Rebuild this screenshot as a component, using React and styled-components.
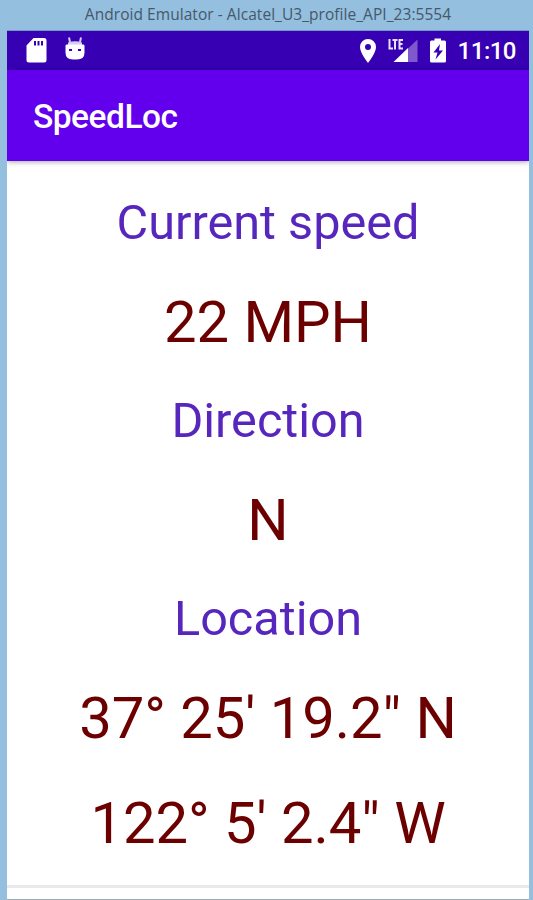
import React from "react";
import styled, { createGlobalStyle } from "styled-components";

const GlobalStyle = createGlobalStyle`
  * { box-sizing: border-box; }
  html, body { margin: 0; padding: 0; }
  body { background: #94bfdf; overflow: hidden; }
`;

const EmulatorWindow = styled.div`
  width: 533px;
  height: 900px;
  display: flex;
  flex-direction: column;
  padding: 0 4px 0 7px;
  background: #94bfdf;
  font-family: Roboto, sans-serif;
`;

const TitleBar = styled.div`
  height: 31px;
  flex: none;
  display: flex;
  justify-content: center;
  padding-top: 4px;
  border-bottom: 1px solid #7493c8;
  color: #46586a;
  font: 15.5px/20px "Open Sans", sans-serif;
  white-space: nowrap;
`;

const TitleText = styled.span`
  letter-spacing: 0.05px;
`;

const Screen = styled.div`
  flex: 1;
  display: flex;
  flex-direction: column;
  overflow: hidden;
  background: #fff;
  border-bottom: 1px solid #9aacb8;
`;

const StatusBar = styled.div`
  height: 39px;
  flex: none;
  display: flex;
  align-items: center;
  justify-content: space-between;
  padding: 0 13px 0 18px;
  background: #3700b3;
  color: #fff;
`;

const IconGroup = styled.div`
  display: flex;
  align-items: center;
  gap: ${(p) => p.$gap}px;
`;

const StatusIcon = styled.svg`
  display: block;
  flex: none;
`;

const Clock = styled.span`
  font-size: 24px;
  line-height: 39px;
  font-weight: 500;
  padding-top: 2px;
  letter-spacing: -0.5px;
`;

const AppBar = styled.header`
  height: 91px;
  flex: none;
  display: flex;
  align-items: center;
  padding: 3px 26px 0;
  background: #6200ee;
  color: #fff;
  box-shadow: 0 1px 5px rgba(0, 0, 0, 0.35);
`;

const AppTitle = styled.h1`
  margin: 0;
  font-size: 33.5px;
  line-height: 40px;
  font-weight: 500;
  letter-spacing: -0.5px;
`;

const Readings = styled.main`
  height: 727px;
  flex: none;
  padding-top: 16px;
  text-align: center;
  border-bottom: 3px solid #e9e9e9;
`;

const Label = styled.div`
  height: 92.5px;
  line-height: 92.5px;
  font-size: 48.6px;
  color: #5726bd;
`;

const Value = styled.div`
  height: 105.5px;
  line-height: 105.5px;
  font-size: 58px;
  color: #6c0000;
  letter-spacing: -0.05px;
`;

const SdCard = () => (
  <StatusIcon width="22" height="27" viewBox="0 0 22 27" fill="#fff">
    <path fillRule="evenodd" d="M8.5 1H19a2.5 2.5 0 0 1 2.5 2.5V23a2.5 2.5 0 0 1-2.5 2.5H4A2.500 2.500 0 0 1 1.500 23V8.500ZM9 4v4.500h2V4ZM12.500 4v4.500h2V4ZM16 4v4.500h2V4Z" />
  </StatusIcon>
);

const AndroidHead = () => (
  <StatusIcon width="22" height="27" viewBox="0 0 22 27">
    <path d="M5 0.500 6 5M17 0.500 16 5" stroke="#d9ccf2" strokeWidth="2" />
    <path d="M4 5.500Q11 3 18 5.500V8H4Z" fill="#d9ccf2" />
    <path d="M2.500 7.500H19.500Q20.500 7.500 20.500 9V15.500Q20.500 22.500 13 22.500H9Q1.500 22.500 1.500 15.500V9Q1.500 7.500 2.500 7.500Z" fill="#fff" />
    <path d="M5 12h3v2H5ZM14 12h3v2h-3Z" fill="#3700b3" />
  </StatusIcon>
);

const Pin = () => (
  <StatusIcon width="18" height="26" viewBox="0 0 18 26" fill="#fff">
    <path fillRule="evenodd" d="M9 1a8 8 0 0 1 8 8C17 15 9 25 9 25S1 15 1 9A8 8 0 0 1 9 1ZM9 6a3 3 0 1 0 0 6 3 3 0 0 0 0-6Z" />
  </StatusIcon>
);

const LteSignal = () => (
  <StatusIcon width="30" height="26" viewBox="0 0 30 26">
    <path d="M20 10.500 29.500 1.500V24H20Z" fill="#8058cd" />
    <path d="M5.500 24 20 10V24Z" fill="#fff" />
    <path d="M1.500 1V10.500H5M4.500 2H9.500M7 2V11.500M15 2H11.500V10.500H15M11.500 6H14.500" fill="none" stroke="#e9e1f8" strokeWidth="2" />
  </StatusIcon>
);

const Battery = () => (
  <StatusIcon width="18" height="26" viewBox="0 0 18 26">
    <path d="M5.500 0.500H12V2.500H15.500Q17 2.500 17 4V23Q17 24.500 15.500 24.500H2.500Q1 24.500 1 23V4Q1 2.500 2.500 2.500H5.500Z" fill="#fff" />
    <path d="M11 6 4.500 14.500H8.500L6.500 21.500 14 12.500H10Z" fill="#3700b3" />
  </StatusIcon>
);

export default function App() {
  return (
    <>
      <GlobalStyle />
      <EmulatorWindow>
        <TitleBar>
          <TitleText>Android Emulator - Alcatel_U3_profile_API_23:5554</TitleText>
        </TitleBar>
        <Screen>
          <StatusBar>
            <IconGroup $gap={17}>
              <SdCard />
              <AndroidHead />
            </IconGroup>
            <IconGroup $gap={11}>
              <Pin />
              <LteSignal />
              <Battery />
              <Clock>11:10</Clock>
            </IconGroup>
          </StatusBar>
          <AppBar>
            <AppTitle>SpeedLoc</AppTitle>
          </AppBar>
          <Readings>
            <Label>Current speed</Label>
            <Value>22 MPH</Value>
            <Label>Direction</Label>
            <Value>N</Value>
            <Label>Location</Label>
            <Value>37° 25' 19.2" N</Value>
            <Value>122° 5' 2.4" W</Value>
          </Readings>
        </Screen>
      </EmulatorWindow>
    </>
  );
}
